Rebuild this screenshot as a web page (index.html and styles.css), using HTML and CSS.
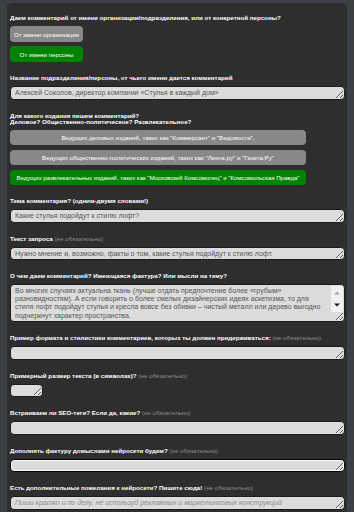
FILE: index.html
```html
<!DOCTYPE html>
<html lang="ru">
<head>
    <meta charset="UTF-8">
    <meta name="viewport" content="width=device-width, initial-scale=1.0">
    <title>Комментарий</title>
    <link rel="stylesheet" href="styles.css">
</head>
<body>
    <div class="form">
        <div class="field">
            <label>Даем комментарий от имени организации/подразделения, или от конкретной персоны?</label>
            <div class="choices">
                <button class="choice small">От имени организации</button>
                <button class="choice small active">От имени персоны</button>
            </div>
        </div>
        <div class="field">
            <label>Название подразделения/персоны, от чьего имени дается комментарий</label>
            <textarea class="line">Алексей Соколов, директор компании «Стулья в каждый дом»</textarea>
        </div>
        <div class="field">
            <label>Для какого издания пишем комментарий?<br>Деловое? Общественно-политическое? Развлекательное?</label>
            <div class="choices wide">
                <button class="choice">Ведущих деловых изданий, таких как "Коммерсант" и "Ведомости".</button>
                <button class="choice">Ведущих общественно-политических изданий, таких как "Лента.ру" и "Газета.Ру"</button>
                <button class="choice active">Ведущих развлекательных изданий, таких как "Московский Комсомолец" и "Комсомольская Правда"</button>
            </div>
        </div>
        <div class="field">
            <label>Тема комментария? (одним-двумя словами!)</label>
            <textarea class="line">Какие стулья подойдут к стилю лофт?</textarea>
        </div>
        <div class="field">
            <label>Текст запроса <span class="opt">(не обязательно)</span></label>
            <textarea class="line">Нужно мнение и, возможно, факты о том, какие стулья подойдут к стилю лофт.</textarea>
        </div>
        <div class="field">
            <label>О чем даем комментарий? Имеющаяся фактура? Или мысли на тему?</label>
            <div class="area-wrap">
                <textarea class="big">Во многих случаях актуальна ткань (лучше отдать предпочтение более «грубым» разновидностям). А если говорить о более смелых дизайнерских идеях аскетизма, то для стиля лофт подойдут стулья и кресла вовсе без обивки – чистый металл или дерево выгодно подчеркнут характер пространства.</textarea>
                <div class="scrollbar">
                    <svg width="12" height="10" viewBox="0 0 12 10"><path d="M3 6.5 L6 3.5 L9 6.5 Z" fill="#a8a8a8"/></svg>
                    <svg width="12" height="10" viewBox="0 0 12 10"><path d="M3 3.5 L9 3.5 L6 6.5 Z" fill="#1a1a1a"/></svg>
                </div>
            </div>
        </div>
        <div class="field">
            <label>Пример формата и стилистики комментариев, которых ты должен придерживаться: <span class="opt">(не обязательно)</span></label>
            <textarea class="line"></textarea>
        </div>
        <div class="field">
            <label>Примерный размер текста (в символах)? <span class="opt">(не обязательно)</span></label>
            <textarea class="line tiny"></textarea>
        </div>
        <div class="field">
            <label>Встраиваем ли SEO-теги? Если да, какие? <span class="opt">(не обязательно)</span></label>
            <textarea class="line"></textarea>
        </div>
        <div class="field">
            <label>Дополнять фактуру домыслами нейросети будем? <span class="opt">(не обязательно)</span></label>
            <textarea class="line focus"></textarea>
        </div>
        <div class="field">
            <label>Есть дополнительные пожелания к нейросети? Пишите сюда! <span class="opt">(не обязательно)</span></label>
            <textarea class="line" placeholder="Пиши кратко и по делу, не используй рекламных и маркетинговых конструкций"></textarea>
        </div>
    </div>
</body>
</html>
```

FILE: styles.css
```css
body {
    margin: 0;
    padding: 3px 7px 0 7px;
    background-color: #3c3f44;
    font-family: "Liberation Sans", Arial, sans-serif;
}
.form {
    background: #2e2e2e;
    border-radius: 5px;
    padding: 12px 2px 10px 3px;
}
.field {
    margin-bottom: 13px;
}
label {
    display: block;
    color: #ffffff;
    font-size: 6.2px;
    font-weight: bold;
    line-height: 6.5px;
    margin-bottom: 4.5px;
}
.opt {
    color: #8a8a8a;
    font-weight: normal;
}
.choices {
    display: flex;
    flex-direction: column;
    gap: 4px;
}
.choices.wide {
    gap: 5px;
}
.choice {
    display: block;
    width: 296px;
    height: 15px;
    padding: 0;
    border: none;
    border-radius: 4px;
    background: #888888;
    color: #ffffff;
    font-family: "Liberation Sans", Arial, sans-serif;
    font-size: 6.2px;
    text-align: center;
    white-space: nowrap;
    overflow: hidden;
}
.choice.small {
    width: 73px;
    height: 16px;
}
.choice.active {
    background: #008300;
}
.choices.wide .choice.active {
    font-size: 6.05px;
}
textarea {
    display: block;
    box-sizing: border-box;
    width: 100%;
    margin: 0;
    padding: 2px 4px;
    background: #dcdcdc;
    color: #555555;
    border: 1px solid #1c1c1c;
    border-radius: 4px;
    font-family: "Liberation Sans", Arial, sans-serif;
    font-size: 7px;
    line-height: 8.5px;
    overflow: hidden;
}
textarea.line {
    height: 13.5px;
}
textarea.tiny {
    width: 33px;
}
.area-wrap {
    position: relative;
}
textarea.big {
    height: 38px;
    padding: 2px 16px 2px 4px;
    line-height: 8.2px;
}
.scrollbar {
    position: absolute;
    top: 2px;
    right: 2px;
    width: 12px;
    height: 26px;
    background: #f1f1f1;
    display: flex;
    flex-direction: column;
    justify-content: space-between;
    padding: 2px 0;
    box-sizing: border-box;
}
.scrollbar svg {
    display: block;
}
textarea.focus {
    border: 1px solid #000000;
    box-shadow: inset 0 0 0 1px #ffffff;
}
textarea::placeholder {
    color: #8c8c8c;
    font-style: italic;
}
```
